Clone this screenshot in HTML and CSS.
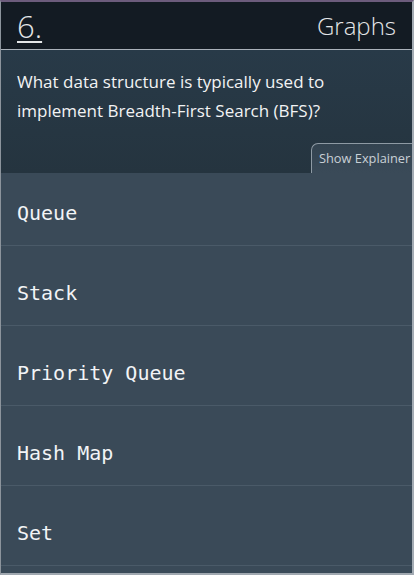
FILE: index.html
```html
<!DOCTYPE html>
<html>
<head>
<meta charset="utf-8">
<link rel="stylesheet" href="styles.css">
</head>
<body>
<div class="frame">
  <header class="top">
    <span class="num">6.</span>
    <span class="topic">Graphs</span>
  </header>
  <section class="question">
    <p class="qtext">What data structure is typically used to implement Breadth-First Search (BFS)?</p>
    <div class="tabrow"><span class="tab">Show Explainer</span></div>
  </section>
  <ul class="options">
    <li class="opt">Queue</li>
    <li class="opt">Stack</li>
    <li class="opt">Priority Queue</li>
    <li class="opt">Hash Map</li>
    <li class="opt">Set</li>
  </ul>
</div>
</body>
</html>
```
FILE: styles.css
```css
html, body {
  margin: 0;
  padding: 0;
  height: 100%;
}
body {
  background: #9aa2aa;
  overflow: hidden;
}
.frame {
  height: 575px;
  box-sizing: border-box;
  border-top: 2px solid #6c5c7c;
  border-left: 1px solid #8c949c;
  border-right: 2px solid #a4acb4;
  border-bottom: 2px solid #a0a8b0;
  display: flex;
  flex-direction: column;
  background: #3a4a58;
  font-family: "Open Sans", "Lato", sans-serif;
  color: #eef0f2;
}
.top {
  height: 47px;
  flex: none;
  background: #131b23;
  border-bottom: 1px solid #aab2ba;
  display: flex;
  justify-content: space-between;
  align-items: center;
  padding: 0 16px 0 16px;
}
.num {
  font-size: 31px;
  font-weight: 300;
  text-decoration: underline;
  text-decoration-thickness: 2px;
  text-underline-offset: 3px;
  color: #e4e6e8;
}
.topic {
  font-size: 24px;
  font-weight: 300;
  color: #e4e6e8;
}
.question {
  background: linear-gradient(to bottom, #283a48, #25343f);
  height: 123px;
  flex: none;
  display: flex;
  flex-direction: column;
  justify-content: space-between;
}
.qtext {
  margin: 0;
  padding: 17px 60px 0 16px;
  font-size: 17px;
  line-height: 29px;
  color: #f2f3f4;
}
.tabrow {
  display: flex;
  justify-content: flex-end;
}
.tab {
  display: block;
  width: 101px;
  height: 30px;
  box-sizing: border-box;
  background: linear-gradient(to bottom, #334350, #3a4a58);
  border: 1px solid #8e9aa4;
  border-right: none;
  border-bottom: none;
  border-top-left-radius: 7px;
  font-size: 12.8px;
  line-height: 28px;
  padding-left: 7px;
  color: #c9d0d6;
  white-space: nowrap;
}
.options {
  list-style: none;
  margin: 0;
  padding: 0;
}
.opt {
  height: 80px;
  display: flex;
  align-items: center;
  padding-left: 16px;
  font-family: "DejaVu Sans Mono", monospace;
  font-size: 20px;
  color: #f2f4f6;
  background: linear-gradient(to bottom, transparent 72px, #4a5a68 72px, #4a5a68 73px, transparent 73px);
}
```
